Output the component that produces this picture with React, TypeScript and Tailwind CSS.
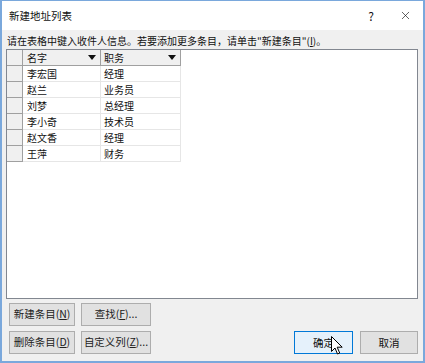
import { X } from "lucide-react";

const ROWS = [
  { name: "李宏国", title: "经理" },
  { name: "赵兰", title: "业务员" },
  { name: "刘梦", title: "总经理" },
  { name: "李小奇", title: "技术员" },
  { name: "赵文香", title: "经理" },
  { name: "王萍", title: "财务" },
];

const font = { fontFamily: '"Noto Sans CJK SC", "Noto Sans", sans-serif' };

function Arrow() {
  return (
    <svg width="8" height="5" viewBox="0 0 8 5" className="shrink-0">
      <path d="M0 0h8L4 5z" fill="#111" />
    </svg>
  );
}

function Btn({ label, hot, suffix = "", w = "w-[66px]" }: { label: string; hot: string; suffix?: string; w?: string }) {
  return (
    <button
      className={`h-[23px] ${w} border border-[#adadad] bg-[#e1e1e1] text-[10.5px] leading-none text-[#222] flex items-center justify-center whitespace-nowrap`}
    >
      {label}(<span className="underline">{hot}</span>){suffix}
    </button>
  );
}

export default function App() {
  return (
    <div
      className="w-[425px] h-[363px] border-2 border-t border-[#7aa8dc] bg-[#f0f0f0] flex flex-col text-[#111]"
      style={font}
    >
      <div className="h-[29px] bg-white flex items-center pl-[7px] pr-[11px] text-[10.5px]">
        <span className="flex-1">新建地址列表</span>
        <span className="w-[10px] text-center mr-[23px] text-[12px]">?</span>
        <X className="w-[13px] h-[13px]" strokeWidth={1.2} />
      </div>

      <div className="flex-1 flex flex-col pl-[4px] pr-[5px]">
        <div className="mt-[3px] h-[16px] text-[10px] leading-[16px] whitespace-nowrap pl-[1px]">
          请在表格中键入收件人信息。若要添加更多条目，请单击"新建条目"(<span className="underline">I</span>)。
        </div>

        <div className="h-[250px] border border-[#828790] bg-white">
          <div className="flex h-[16px] text-[10px] leading-none">
            <div className="w-[16px] bg-[#f0f0f0] border-r border-b border-[#a0a0a0]" />
            <div className="w-[78px] bg-[#f0f0f0] border-r border-b border-[#a0a0a0] flex items-center pl-[4px] pr-[4px]">
              <span className="flex-1">名字</span>
              <Arrow />
            </div>
            <div className="w-[80px] bg-[#f0f0f0] border-r border-b border-[#a0a0a0] flex items-center pl-[3px] pr-[4px]">
              <span className="flex-1">职务</span>
              <Arrow />
            </div>
          </div>
          {ROWS.map((r) => (
            <div key={r.name} className="flex h-[16px] text-[10px] leading-none">
              <div className="w-[16px] bg-[#f0f0f0] border-r border-b border-[#a0a0a0]" />
              <div className="w-[78px] border-r border-b border-[#e6e6e6] flex items-center pl-[4px]">{r.name}</div>
              <div className="w-[80px] border-r border-b border-[#e6e6e6] flex items-center pl-[3px]">{r.title}</div>
            </div>
          ))}
        </div>

        <div className="mt-[4px] flex items-end">
          <div className="grid grid-cols-[66px_70px] gap-x-[6px] gap-y-[5px] pl-[3px]">
            <Btn label="新建条目" hot="N" />
            <Btn label="查找" hot="F" suffix="..." w="w-[70px]" />
            <Btn label="删除条目" hot="D" />
            <Btn label="自定义列" hot="Z" suffix="..." w="w-[70px]" />
          </div>
          <div className="flex-1" />
          <div className="relative mr-[7px]">
            <button className="h-[23px] w-[59px] border border-[#0078d7] bg-[#e5f1fb] text-[10.5px] flex items-center justify-center">
              确定
            </button>
            <svg
              width="12"
              height="19"
              viewBox="0 0 12 19"
              className="absolute left-[37px] top-[5px]"
            >
              <path
                d="M0.5 0.5v15l3.5-3.5 2.5 6 2.2-1-2.5-5.8h5z"
                fill="#fff"
                stroke="#000"
                strokeWidth="1"
                strokeLinejoin="round"
              />
            </svg>
          </div>
          <button className="h-[23px] w-[58px] border border-[#adadad] bg-[#e1e1e1] text-[10.5px] flex items-center justify-center">
            取消
          </button>
        </div>
      </div>
    </div>
  );
}
